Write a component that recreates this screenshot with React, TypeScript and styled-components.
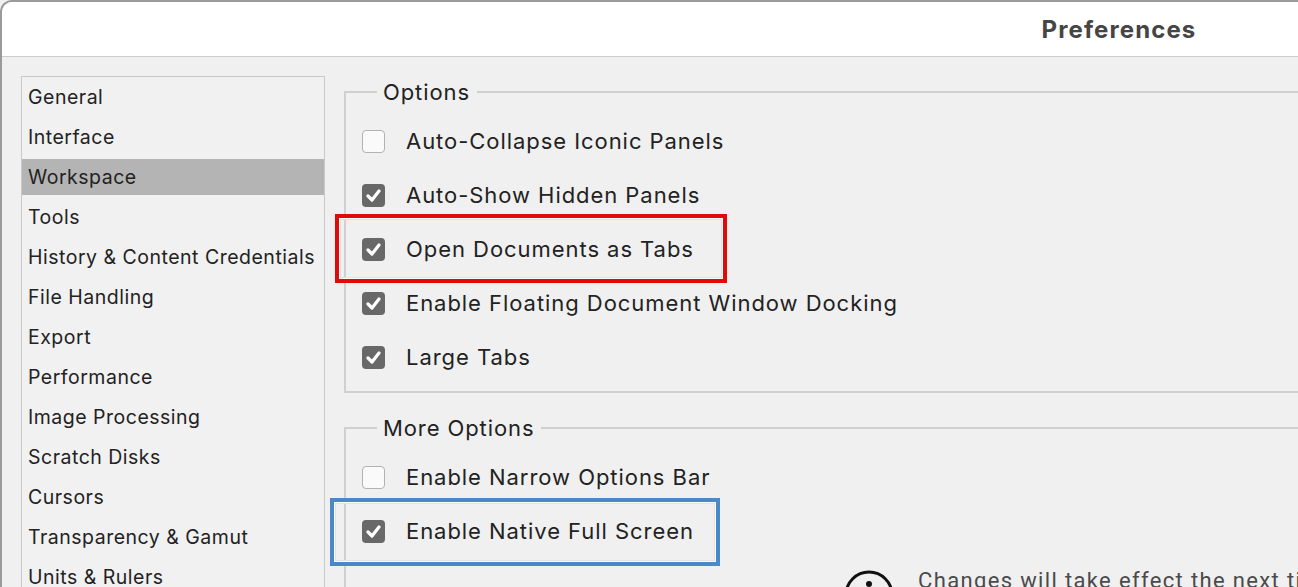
import styled, { createGlobalStyle, css } from "styled-components";

const GlobalStyle = createGlobalStyle`
  html, body {
    margin: 0;
    padding: 0;
    background: #f0f0f0;
    overflow: hidden;
  }
  body {
    font-family: Inter, "Noto Sans", "Liberation Sans", sans-serif;
    color: #222;
  }
`;

const sections = [
  "General",
  "Interface",
  "Workspace",
  "Tools",
  "History & Content Credentials",
  "File Handling",
  "Export",
  "Performance",
  "Image Processing",
  "Scratch Disks",
  "Cursors",
  "Transparency & Gamut",
  "Units & Rulers",
];

type Mark = "red" | "blue" | undefined;

const options: { label: string; checked: boolean; mark?: Mark }[] = [
  { label: "Auto-Collapse Iconic Panels", checked: false },
  { label: "Auto-Show Hidden Panels", checked: true },
  { label: "Open Documents as Tabs", checked: true, mark: "red" },
  { label: "Enable Floating Document Window Docking", checked: true },
  { label: "Large Tabs", checked: true },
];

const moreOptions: { label: string; checked: boolean; mark?: Mark }[] = [
  { label: "Enable Narrow Options Bar", checked: false },
  { label: "Enable Native Full Screen", checked: true, mark: "blue" },
];

const Window = styled.div`
  width: 2236px;
  height: 600px;
  box-sizing: border-box;
  border-top: 2px solid #9a9a9a;
  border-left: 2px solid #9a9a9a;
  border-top-left-radius: 12px;
  background: #f0f0f0;
  overflow: hidden;
  display: flex;
  flex-direction: column;
`;

const TitleBar = styled.div`
  height: 54px;
  flex: 0 0 auto;
  background: #fff;
  border-bottom: 1px solid #cdcdcd;
  display: flex;
  align-items: center;
  justify-content: center;
  font-size: 24px;
  font-weight: 700;
  color: #454545;
  letter-spacing: 1.1px;
`;

const Body = styled.div`
  display: flex;
  gap: 19px;
  padding: 19px 0 0 19px;
  flex: 1 1 auto;
`;

const Sidebar = styled.ul`
  list-style: none;
  margin: 0;
  padding: 0;
  width: 302px;
  flex: 0 0 auto;
  display: flex;
  flex-direction: column;
  border: 1px solid #c8c8c8;
  border-bottom: none;
  background: #f1f1f1;
`;

const SidebarItem = styled.li<{ $active?: boolean }>`
  height: 36px;
  margin: 2px 0;
  line-height: 36px;
  padding-left: 6px;
  font-size: 19.5px;
  letter-spacing: 0.5px;
  color: #222;
  white-space: nowrap;
  background: ${(p) => (p.$active ? "#b4b4b4" : "transparent")};
`;

const Main = styled.div`
  flex: 1 1 auto;
  display: flex;
  flex-direction: column;
  gap: 20px;
  padding-top: 1px;
`;

const Group = styled.fieldset`
  margin: 0;
  padding: 0;
  border: 2px solid #d0d0d0;
  min-width: 0;
`;

const Legend = styled.legend`
  margin-left: 31px;
  padding: 0 7px 0 6px;
  font-size: 22px;
  letter-spacing: 0.9px;
  line-height: 30px;
  color: #222;
`;

const Rows = styled.div`
  display: flex;
  flex-direction: column;
  padding: 7px 0 7px 16px;
`;

const markStyles = {
  red: css`
    &::after {
      left: -27px;
      top: -8px;
      width: 392px;
      height: 69px;
      border-color: #e00a0a;
    }
  `,
  blue: css`
    &::after {
      left: -32px;
      top: -6px;
      width: 390px;
      height: 68px;
      border-color: #4a89c7;
    }
  `,
};

const Row = styled.label<{ $mark?: Mark }>`
  position: relative;
  height: 54px;
  display: flex;
  align-items: center;
  gap: 21px;
  font-size: 22px;
  letter-spacing: 0.95px;
  color: #222;
  white-space: nowrap;
  ${(p) =>
    p.$mark &&
    css`
      &::after {
        content: "";
        position: absolute;
        box-sizing: border-box;
        border: 4px solid;
        box-shadow: inset 0 0 0 1px #fbfbfb, inset 0 0 0 2px #e2e2e2;
        pointer-events: none;
      }
    `}
  ${(p) => (p.$mark ? markStyles[p.$mark] : "")}
`;

const Box = styled.span<{ $checked: boolean }>`
  width: 23px;
  height: 23px;
  box-sizing: border-box;
  border-radius: 4px;
  flex: 0 0 auto;
  display: flex;
  align-items: center;
  justify-content: center;
  background: ${(p) => (p.$checked ? "#686868" : "#fafafa")};
  border: ${(p) => (p.$checked ? "none" : "1.5px solid #b2b2b2")};
`;

const InfoRow = styled.div`
  display: flex;
  align-items: flex-start;
  gap: 24px;
  padding: 12px 0 0 482px;
  white-space: nowrap;
`;

const InfoText = styled.span`
  font-family: Roboto, "Noto Sans", sans-serif;
  font-size: 22px;
  letter-spacing: 1.35px;
  line-height: 22px;
  color: #4a4a4a;
`;

const Check = () => (
  <svg width="15" height="13" viewBox="0 0 15 13">
    <path
      d="M2 7 L6 11 L13 2"
      fill="none"
      stroke="#fff"
      strokeWidth="3.2"
      strokeLinecap="round"
      strokeLinejoin="round"
    />
  </svg>
);

const InfoIcon = () => (
  <svg width="50" height="50" viewBox="0 0 50 50">
    <circle cx="25" cy="25" r="23" fill="none" stroke="#111" strokeWidth="3" />
    <circle cx="25" cy="14" r="3" fill="#111" />
    <rect x="23" y="21" width="4" height="17" fill="#111" />
  </svg>
);

const OptionRow = ({ label, checked, mark }: { label: string; checked: boolean; mark?: Mark }) => (
  <Row $mark={mark}>
    <Box $checked={checked}>{checked && <Check />}</Box>
    {label}
  </Row>
);

export default function App() {
  return (
    <>
      <GlobalStyle />
      <Window>
        <TitleBar>Preferences</TitleBar>
        <Body>
          <Sidebar>
            {sections.map((s) => (
              <SidebarItem key={s} $active={s === "Workspace"}>
                {s}
              </SidebarItem>
            ))}
          </Sidebar>
          <Main>
            <Group>
              <Legend>Options</Legend>
              <Rows>
                {options.map((o) => (
                  <OptionRow key={o.label} {...o} />
                ))}
              </Rows>
            </Group>
            <Group>
              <Legend>More Options</Legend>
              <Rows>
                {moreOptions.map((o) => (
                  <OptionRow key={o.label} {...o} />
                ))}
                <InfoRow>
                  <InfoIcon />
                  <InfoText>Changes will take effect the next time you start Photoshop.</InfoText>
                </InfoRow>
              </Rows>
            </Group>
          </Main>
        </Body>
      </Window>
    </>
  );
}
